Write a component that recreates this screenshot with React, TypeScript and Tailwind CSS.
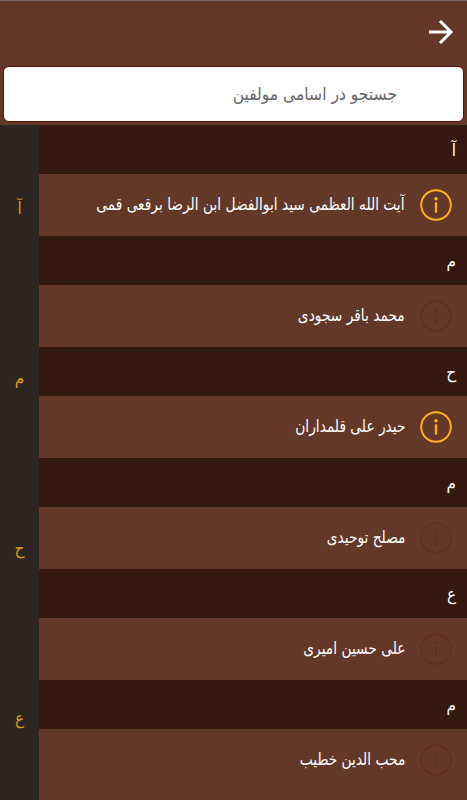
const groups = [
  { letter: 'آ', name: 'آیت الله العظمی سید ابوالفضل ابن الرضا برقعی قمی', hasInfo: true },
  { letter: 'م', name: 'محمد باقر سجودی', hasInfo: false },
  { letter: 'ح', name: 'حیدر علی قلمداران', hasInfo: true },
  { letter: 'م', name: 'مصلح توحیدی', hasInfo: false },
  { letter: 'ع', name: 'علی حسین امیری', hasInfo: false },
  { letter: 'م', name: 'محب الدین خطیب', hasInfo: false },
]

const indexLetters = ['آ', 'م', 'ح', 'ع']

function InfoIcon({ active }: { active: boolean }) {
  return (
    <svg
      viewBox="0 0 32 32"
      fill="none"
      className={active ? 'size-8 shrink-0 text-[#fdb40a]' : 'size-8 shrink-0 text-[#642e1d]'}
    >
      <circle cx="16" cy="16" r="14.8" stroke="currentColor" strokeWidth="1.9" />
      <circle cx="16" cy="9.8" r="1.8" fill="currentColor" />
      <path d="M16 14.2v8.6" stroke="currentColor" strokeWidth="2.2" strokeLinecap="round" />
    </svg>
  )
}

export default function App() {
  return (
    <div
      dir="rtl"
      className="flex h-[800px] w-[467px] flex-col overflow-hidden bg-[#643828] font-['DejaVu_Sans_Condensed','DejaVu_Sans',sans-serif] text-white"
    >
      <header className="flex h-[66px] shrink-0 items-center border-t border-[#776b66] px-3">
        <svg
          viewBox="0 0 28 28"
          fill="none"
          className="mt-[-3px] size-7"
          stroke="white"
          strokeWidth="3"
        >
          <path d="M2 14h22.5M13 3l11 11-11 11" />
        </svg>
      </header>
      <div className="mx-[3px] h-14 shrink-0 rounded-md border border-[#581006] bg-white">
        <p className="pt-3.5 pr-[66px] text-[17.3px] leading-[26px] text-[#666]">
          جستجو در اسامی مولفین
        </p>
      </div>
      <main className="mt-[3px] flex min-h-0 flex-1">
        <ul className="min-w-0 flex-1">
          {groups.map((g) => (
            <li key={g.name}>
              <h2 className="h-[49px] bg-[#33190f] pt-[11px] pr-[11px] text-[17px] leading-7">
                {g.letter}
              </h2>
              <div className="flex h-[62px] items-center gap-[15px] pr-[15px]">
                <InfoIcon active={g.hasInfo} />
                <p className="origin-right scale-x-[0.9] text-[17px] whitespace-nowrap">{g.name}</p>
              </div>
            </li>
          ))}
        </ul>
        <nav className="flex w-[39px] shrink-0 flex-col bg-[#2d2620] pt-[69px] text-center text-[17px] leading-7 text-[#dc9c0c]">
          {indexLetters.map((l) => (
            <span key={l} className="h-[170px] shrink-0">
              {l}
            </span>
          ))}
        </nav>
      </main>
    </div>
  )
}
